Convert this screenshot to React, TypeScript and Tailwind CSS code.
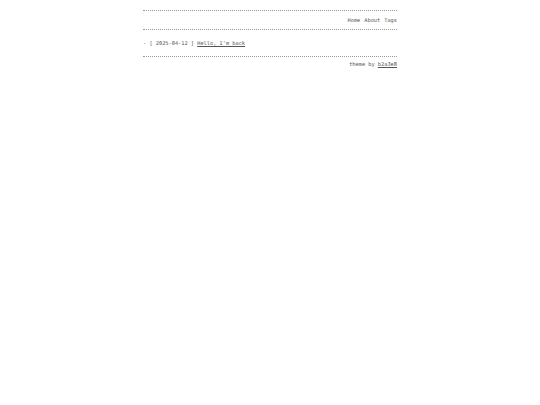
import React from "react";

export default function App() {
  return (
    <div className="w-[254px] mx-auto pt-[10px] text-[5.3px] leading-[7px] text-[#555] font-['DejaVu_Sans_Mono',monospace]">
      <header className="border-t border-b border-dotted border-[#999] h-[20px] flex items-center justify-end gap-[4px]">
        <a>Home</a>
        <a>About</a>
        <a>Tags</a>
      </header>
      <main className="h-[27px] flex items-center border-b border-dotted border-[#999]">
        <div className="mt-[1px]">
          <span>- [ 2025-04-12 ] </span>
          <a className="underline">Hello, I'm back</a>
        </div>
      </main>
      <footer className="flex justify-end pt-[4px]">
        <span>
          theme by <a className="underline">b2a3e8</a>
        </span>
      </footer>
    </div>
  );
}
